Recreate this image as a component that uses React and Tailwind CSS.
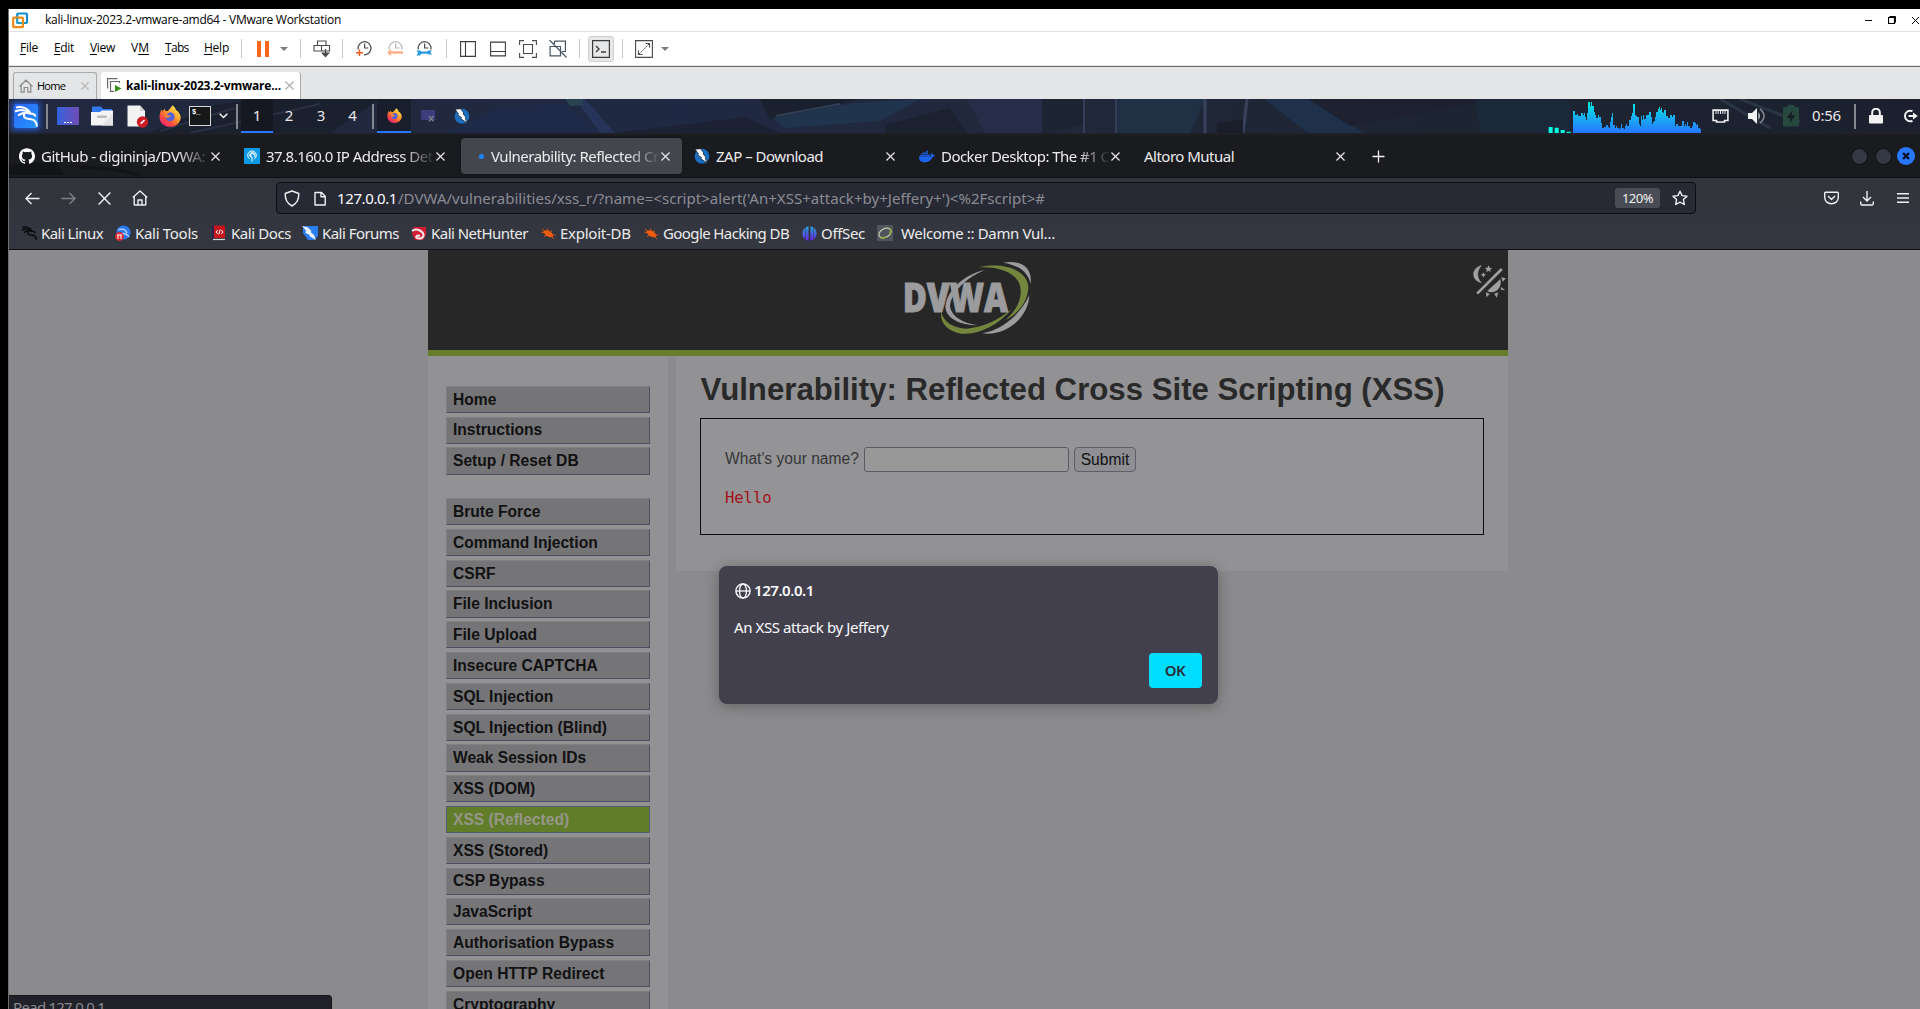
import React from "react";
import { SiGithub, SiDocker } from "react-icons/si";

const noto = "font-['Noto_Sans',sans-serif] text-[15px] whitespace-nowrap";
const ui = "font-['Open_Sans',sans-serif] text-[12px] whitespace-nowrap text-black";

function Svg({ w, h, vb, className = "", children }) {
  return (
    <svg className={`block shrink-0 ${className}`} width={w} height={h} viewBox={vb || `0 0 ${w} ${h}`} fill="none">
      {children}
    </svg>
  );
}

/* ---------- shared icons ---------- */

function Cross({ s = 8, className = "" }) {
  return (
    <Svg w={s} h={s} vb="0 0 8 8" className={className}>
      <path d="M0.4 0.4 7.6 7.6M7.6 0.4 0.4 7.6" stroke="currentColor" strokeWidth="1.1" />
    </Svg>
  );
}

function Dragon({ s, color, weight }) {
  return (
    <Svg w={s} h={s} vb="0 0 24 24">
      <path d="M2 3.500C8 2 14 4.500 16.500 9M1 7.500C6 5 12 6 16 9.500M4 11.500C8 8.500 13 8 17 10M10.500 9.500C8.500 14.500 13 15 17 15.200 20.500 15.500 22.500 18 23 22.500M17 9.500C19.500 9.500 21 11 21.500 12.500" stroke={color} strokeWidth={weight} />
    </Svg>
  );
}

function ZapIcon({ className = "" }) {
  return (
    <Svg w={16} h={16} className={className}>
      <circle cx="8" cy="8.2" r="7.4" fill="#1a6fc0" />
      <path d="M1 1.2 6.5.8 10 5.2 9 5.8 12 9.5 11.2 10 13.4 15 6.6 10.6 7.6 9.8 3.6 6.8 4.6 6Z" fill="#fff" stroke="#16181f" strokeWidth=".7" />
    </Svg>
  );
}

function FirefoxIcon({ s, className = "" }) {
  return (
    <Svg w={s} h={s} vb="0 0 24 24" className={className}>
      <defs>
        <linearGradient id="ffx" x1="19" y1="2" x2="4" y2="22" gradientUnits="userSpaceOnUse">
          <stop offset="0" stopColor="#ffe14d" />
          <stop offset=".4" stopColor="#ffa02c" />
          <stop offset=".72" stopColor="#ff4c3f" />
          <stop offset="1" stopColor="#f0257a" />
        </linearGradient>
      </defs>
      <path d="M14.6.4c2.6 1.600 3.600 3.600 4 5.400 1 .2 1.700.8 2 1.200 1.900 2.200 3 4.200 3 6.300C23.600 19.200 18.600 23.800 12.200 23.800 5.600 23.800.6 19.200.6 13c0-3.400 1-6.200 2.300-8.200L3.900 7.200 6.200 4l.8 2.600c1-.2 2-.1 2.800.3C10.600 4.400 13.400 3.600 14.600.4Z" fill="url(#ffx)" />
      <circle cx="12" cy="12.800" r="5" fill="#4f62dc" />
      <path d="M7 6.600c1.800-.6 3.800.4 4.300 1.900-1.400.2-1.500 1.500-2.900 1.900 1.200 1.600 3.400.7 4.600.9-1 3-4.600 3.300-6 1.600C6.200 11.500 6 8.700 7 6.600Z" fill="#ff8a2a" />
    </Svg>
  );
}

function SpiderIcon() {
  return (
    <Svg w={15} h={13}>
      <path d="M2.500 4C4 2.500 8 3 10.500 5.500 12.500 7.500 12.500 10 10.500 10.300 7 10.500 3 8 2.500 4Z" fill="#ee5a0e" />
      <path d="M1 1.800 4 4.500M.3 5 4 6M3 9.500 6 8M6.500 1.500 7 4M10.500 3.500 9.500 5.500M14.500 8 11 8M13 12 10.500 9.500" stroke="#ee5a0e" strokeWidth=".9" />
    </Svg>
  );
}

/* ---------- VMware chrome ---------- */

function TitleBar() {
  return (
    <div className="flex h-[23px] items-center border-b border-[#e0e0e0] bg-white pl-[3px]">
      <Svg w={17} h={17}>
        <rect x="5.200" y="1.500" width="9.800" height="9.500" rx="1" stroke="#0f8fcb" strokeWidth="2.200" />
        <rect x="1.200" y="5.700" width="9.800" height="9.500" rx="1" stroke="#ef8a14" strokeWidth="2.200" />
        <path d="M5.200 6v5h5" stroke="#2d9dc0" strokeWidth="1.600" />
      </Svg>
      <span className={`${ui} ml-4 tracking-[-0.262px]`}>kali-linux-2023.2-vmware-amd64 - VMware Workstation</span>
      <div className="ml-auto flex items-center text-black">
        <span className="h-px w-[7px] bg-black" />
        <Svg w={8} h={8} className="ml-4">
          <path d="M1.500 .5H7.500V6.500" stroke="#000" />
          <path d="M.5 1.500H6.500V7.500H.5Z" stroke="#000" strokeWidth="1.200" />
        </Svg>
        <Svg w={7} h={7} className="mr-px ml-4"><path d="M0 0 7 7M7 0 0 7" stroke="#000" /></Svg>
      </div>
    </div>
  );
}

function MenuWord({ a, mid, b, className }) {
  return (
    <span className={`${ui} -mt-px ${className}`}>
      {a}<u className="underline-offset-2">{mid}</u>{b}
    </span>
  );
}

const Sep = ({ className = "" }) => <span className={`h-[19px] w-px bg-[#c6c6c6] ${className}`} />;
const Caret = ({ className }) => (
  <Svg w={8} h={4} className={className}><path d="M0 0H8L4 4Z" fill="#7b7b7b" /></Svg>
);

function Clock({ dim, children, className }) {
  return (
    <Svg w={17} h={17} className={className}>
      <g opacity={dim ? 0.4 : 1}>
        <path d="M2.300 9.500A6.400 6.400 0 1 1 14.800 9.500M8.600 3.500V8H12.300" stroke="#4a4a4a" strokeWidth="1.200" />
      </g>
      {children}
    </Svg>
  );
}

function MenuBar() {
  return (
    <div className="flex h-[35px] items-start border-b border-[#6a6a6a] bg-white">
      <div className="flex h-[34px] w-full items-center border-b border-[#e6e6e6]">
        <MenuWord mid="F" b="ile" className="ml-[11px] w-[34px] tracking-[-0.25px]" />
        <MenuWord mid="E" b="dit" className="w-[36px] tracking-[-0.33px]" />
        <MenuWord mid="V" b="iew" className="w-[41px] tracking-[-0.3px]" />
        <MenuWord a="V" mid="M" className="w-[34px]" />
        <MenuWord mid="T" b="abs" className="w-[39px] tracking-[-0.7px]" />
        <MenuWord mid="H" b="elp" className="w-[37px] tracking-[-0.25px]" />
        <Sep />
        <div className="ml-[15px] flex gap-1">
          <span className="h-4 w-1 bg-[#f9671a]" />
          <span className="h-4 w-1 bg-[#f9671a]" />
        </div>
        <Caret className="ml-[11px]" />
        <Sep className="ml-[12px]" />
        <Svg w={18} h={18} className="ml-[12px]">
          <path d="M4.500 1H13V5.500H4.500ZM1 5.500H8.500V11H1ZM8.500 5.500H16.500V11H8.500Z" stroke="#4a4a4a" strokeWidth="1.100" />
          <path d="M12.500 9V16M9.500 13.200 12.500 16.500 15.500 13.200Z" stroke="#4a4a4a" strokeWidth="1.300" fill="#4a4a4a" />
        </Svg>
        <Sep className="ml-[11px]" />
        <Clock className="ml-[13px]">
          <path d="M14.800 9A6.400 6.400 0 0 1 8 14.800" stroke="#4a4a4a" strokeWidth="1.200" />
          <path d="M3.500 9.500V16M0 12.700H7" stroke="#f05a1a" strokeWidth="1.400" />
        </Clock>
        <Clock dim className="ml-[14px]"><path d="M0 12.500 4 9V11.200H16V13.800H4V16Z" fill="#ffb08c" /></Clock>
        <Clock className="ml-[12px]"><path d="M.5 10.500H4L5.500 11.500H11L12.500 10.500H16L14.500 12.500 16 14.500H12.500L11 13.700H5.500L4 15.500H.5L2 13Z" fill="#2c9ae0" /></Clock>
        <Sep className="ml-[13px]" />
        <Svg w={16} h={16} className="ml-[13px]"><path d="M.6.600H15.400V15.400H.6ZM5.500.5V15.500" stroke="#3c3c3c" strokeWidth="1.100" /></Svg>
        <Svg w={16} h={16} className="ml-[14px]"><path d="M.6 1.100H15.400V14.900H.6ZM.6 10.500H15.400" stroke="#3c3c3c" strokeWidth="1.100" /></Svg>
        <Svg w={18} h={18} className="ml-[13px]"><path d="M.6 5V.6H5M13 .6H17.400V5M17.400 13V17.400H13M5 17.400H.6V13M4.500 4.500H13.500V13.500H4.500Z" stroke="#4a4a4a" strokeWidth="1.100" /></Svg>
        <Svg w={18} h={18} className="ml-3"><path d="M5.500 1.100H16.400V11.500H13M5.500 1.100V4M1.100 6.500V15.900H11.500V6.500ZM.5 0 17.500 17.500" stroke="#485563" strokeWidth="1.200" /></Svg>
        <Sep className="ml-3" />
        <div className="ml-2 flex h-[26px] w-[26px] items-center justify-center rounded-[3px] border border-[#cfcfcf] bg-[#e6e7e8]">
          <Svg w={18} h={18}><path d="M.6.600H17.400V17.400H.6Z" stroke="#3c3c3c" strokeWidth="1.200" /><path d="M4 6 7 9 4 12M9 12H14" stroke="#3c3c3c" strokeWidth="1.400" /></Svg>
        </div>
        <Sep className="ml-2" />
        <Svg w={18} h={18} className="ml-3"><path d="M.6.600H17.400V17.400H.6ZM10.500 3.500H14.500V7.500M3.500 10.500V14.500H7.500" stroke="#4a4a4a" strokeWidth="1.100" /><path d="M14 4 4 14" stroke="#4a4a4a" strokeDasharray="2 1" /></Svg>
        <Caret className="ml-2" />
      </div>
    </div>
  );
}

function VmTabs() {
  return (
    <div className="flex h-[32px] items-end bg-[#e3e5e6] pl-1">
      <div className="flex h-[27px] w-[84px] items-center rounded-t-[3px] border border-b-0 border-[#a9a9a9] pl-[5px]">
        <Svg w={14} h={14}><path d="M.5 7.500 7 1.200 13.500 7.500M2.200 6V13.200H5.200V8.500H8.800V13.200H11.800V6" stroke="#8a8a8a" strokeWidth="1.200" /></Svg>
        <span className="ml-1 w-[44px] font-['Open_Sans',sans-serif] text-[11px] tracking-[-0.75px] text-black">Home</span>
        <Cross s={8} className="text-[#b0b0b0]" />
      </div>
      <div className="ml-1 flex h-[27px] w-[200px] items-center rounded-t-[3px] border-r border-[#a9a9a9] bg-white pl-[6px]">
        <Svg w={15} h={15}>
          <path d="M10.500.6H.6V10.500M12.500 5V3.500H3.500V13.400H7" stroke="#6a6a6a" strokeWidth="1.200" />
          <path d="M8 7 14.500 10.500 8 14Z" fill="#35931a" />
        </Svg>
        <span className={`${ui} ml-1 w-[159px] font-bold tracking-[-0.2px]`}>kali-linux-2023.2-vmware...</span>
        <Cross s={9} className="text-[#b0b0b0]" />
      </div>
    </div>
  );
}

/* ---------- Kali panel ---------- */

function PanelWallpaper() {
  return (
    <svg className="absolute inset-0 h-[34px] w-[1911px]" viewBox="9 99 1911 34" preserveAspectRatio="none">
      <defs>
        <linearGradient id="wp" x1="0" x2="1" y1="0" y2="0">
          <stop offset="0" stopColor="#222941" />
          <stop offset=".12" stopColor="#20283c" />
          <stop offset=".35" stopColor="#202943" />
          <stop offset=".55" stopColor="#20283a" />
          <stop offset=".75" stopColor="#1d2533" />
          <stop offset="1" stopColor="#1c202e" />
        </linearGradient>
      </defs>
      <rect x="9" y="99" width="1911" height="34" fill="url(#wp)" />
      <g opacity=".8">
        <path d="M150 133 215 105 265 99H380L330 133Z" fill="#1b1f2c" />
        <path d="M160 131 235 108M190 133 320 104" stroke="#2c3346" strokeWidth="2" />
        <path d="M445 133 500 106 565 104 600 133Z" fill="#1f2b4b" />
        <path d="M575 99H585L615 133H600Z" fill="#27375e" />
        <path d="M565 99H583V105L570 106Z" fill="#2c4a55" />
        <path d="M615 133 745 117 780 133Z" fill="#1c2030" />
        <path d="M760 99H860L770 120Z" fill="#1b1f2b" />
        <path d="M772 118 855 103 920 99 880 121 785 128Z" fill="#213752" />
        <path d="M776 116 840 104" stroke="#34465c" strokeWidth="2" />
        <path d="M885 125 949 108 967 133H885Z" fill="#1c202d" />
        <path d="M967 99H1042V133H985Z" fill="#272f4c" />
        <path d="M1042 99H1085V125L1042 133Z" fill="#1d2430" />
        <path d="M1084 99V133M1116 99V133" stroke="#3a4460" strokeWidth="2" />
        <path d="M1118 99H1205L1190 133H1118Z" fill="#1f3448" />
        <path d="M1205 99V133M1247 99 1243 133" stroke="#414866" strokeWidth="3" />
        <path d="M1217 124 1243 119V133H1217Z" fill="#191c28" />
        <path d="M1264 99H1308L1364 133H1308Z" fill="#1f3350" />
        <path d="M1308 99H1500L1350 126Z" fill="#1d2030" />
        <path d="M1475 99H1570V133H1480Z" fill="#1b2a3b" />
        <path d="M1720 99 1770 128M1740 99 1800 122" stroke="#2d3a48" strokeWidth="3" />
      </g>
    </svg>
  );
}

function CpuGraph() {
  return (
    <Svg w={154} h={32} vb="448 303 462 96">
      <defs>
        <linearGradient id="cpu" x1="0" y1="306" x2="0" y2="398" gradientUnits="userSpaceOnUse">
          <stop offset="0" stopColor="#00f0e0" />
          <stop offset=".5" stopColor="#16b0f2" />
          <stop offset="1" stopColor="#2777ff" />
        </linearGradient>
      </defs>
      <path d="M450 381h12v18h-12ZM468 383h12v16h-12ZM486 390h12v9h-12ZM504 395h12v4h-12Z" fill="#00ffe0" />
      <path
        shapeRendering="crispEdges"
        fill="url(#cpu)"
        d="M522 399V333H528V345H534V341H537V348H546V340H552V345H555V339H558V350H561V360H564V340H567V306H573V318H576V307H579V318H585V335H588V345H591V354H597V345H600V352H606V370H609V384H615V381H621V374H627V381H630V384H633V366H636V352H639V339H642V375H648V384H651V378H654V384H660V387H663V384H666V372H669V384H675V387H678V378H681V372H684V378H690V360H696V348H699V340H702V312H708V345H711V349H714V351H720V372H723V377H726V348H730V360H733V345H736V357H742V345H752V336H756V351H759V372H762V366H766V363H769V350H773V335H778V328H781V321H784V329H787V325H790V335H793V340H796V331H802V348H808V354H813V345H819V350H822V345H828V378H833V372H838V377H849V363H855V378H858V372H861V378H864V366H867V377H873V384H879V378H882V366H888V369H893V375H896V371H899V384H903V387H906V399Z"
      />
    </Svg>
  );
}

const PSep = ({ className = "" }) => <span className={`h-[25px] w-[2px] bg-[#85878f] ${className}`} />;

function KaliPanel() {
  const num = `${noto} flex h-[33px] items-center justify-center text-[#e8e8ea]`;
  return (
    <div className="relative h-[36px] border-b-2 border-[#1f2025] bg-[#20273a]">
      <PanelWallpaper />
      <div className="relative flex h-[34px] items-center">
        <div className="ml-[5px] flex h-6 w-6 items-center justify-center overflow-hidden rounded-[2px] bg-gradient-to-br from-[#2e63f5] to-[#2596ff] shadow-[0_0_5px_2px_#2458c8]">
          <Dragon s={24} color="#fff" weight={2} />
        </div>
        <PSep className="ml-2" />
        <div className="ml-[9px] flex h-[18px] w-[22px] items-end justify-center gap-px bg-gradient-to-r from-[#2a63dd] to-[#6d4bb5] pb-0.5">
          <span className="h-px w-0.5 bg-white" /><span className="h-px w-0.5 bg-white" /><span className="h-px w-0.5 bg-white" />
        </div>
        <Svg w={22} h={20} className="ml-3">
          <path d="M1 8V1.500Q1 .5 2 .5H10L12 3H20Q21 3 21 4V8Z" fill="#2f78ee" />
          <path d="M0 6H9L11 4.500H22V19.500H0Z" fill="#f4f4f4" />
          <path d="M22 7V19.500H11Z" fill="#e3e3e3" />
          <rect x="6" y="9.500" width="10" height="2.500" rx="1" fill="#bdbdbd" />
        </Svg>
        <Svg w={22} h={23} className="ml-[14px]">
          <path d="M.5.500H13L18 6V21.500H.5Z" fill="#f3f3f3" />
          <path d="M13 .5V6H18Z" fill="#cfcfcf" />
          <circle cx="15.500" cy="17" r="5.700" fill="#cc1d24" />
          <path d="M13.200 19.300 14 17.300 17 14.500 18 15.500 15.200 18.500Z" fill="#fff" />
        </Svg>
        <FirefoxIcon s={22} className="ml-2.5" />
        <div className="ml-2 h-5 w-[22px] border border-[#d6d6d6] bg-[#151718]">
          <div className="h-2 pl-0.5 font-['Liberation_Mono',monospace] text-[7px] leading-[10px] font-bold text-white">$_</div>
        </div>
        <Svg w={9} h={6} className="ml-2"><path d="M.7.800 4.500 4.500 8.300.8" stroke="#f0f0f0" strokeWidth="1.600" /></Svg>
        <PSep className="ml-2" />
        <div className="ml-[3px] h-[34px] w-8 border-b-2 border-[#2777ff] bg-[#151821]"><div className={num}>1</div></div>
        <div className={`${num} -mt-px w-8`}>2</div>
        <div className={`${num} -mt-px w-8`}>3</div>
        <div className={`${num} -mt-px w-[31px]`}>4</div>
        <PSep className="ml-1" />
        <div className="ml-[3px] flex h-[34px] w-[34px] items-center justify-center border-b-2 border-[#2777ff] bg-[#191e2d]"><FirefoxIcon s={15} /></div>
        <Svg w={16} h={14} className="ml-[9px]">
          <path d="M1 1H15V11H1Z" fill="#3d3c7c" />
          <path d="M9 7 13.500 12.500M13.500 7 9 12.500" stroke="#7a7f8c" strokeWidth="1.300" />
        </Svg>
        <ZapIcon className="ml-[18px]" />
        <div className="mr-[10px] ml-auto flex h-[34px] items-end"><CpuGraph /></div>
        <Svg w={17} h={14}>
          <path d="M1.100 1.100H15.900V11.500H12.500V13H4.500V11.500H1.100Z" stroke="#f0f0f0" strokeWidth="1.600" />
          <path d="M4 2V5M6.200 2V5M8.500 2V5M10.800 2V5M13 2V5" stroke="#f0f0f0" strokeWidth="1" />
        </Svg>
        <Svg w={18} h={16} className="ml-[19px]">
          <path d="M0 5H4L9 0V16L4 11H0Z" fill="#f2f2f2" />
          <path d="M10.500 4Q13 8 10.500 12Z" fill="#f2f2f2" />
          <path d="M12 .8Q20 8 12 15.200" stroke="#83868e" strokeWidth="1.600" />
        </Svg>
        <Svg w={16} h={22} className="ml-[17px]">
          <path d="M0 2H4.500V0H11.500V2H16V21.500H0Z" fill="#27483f" />
          <path d="M9.500 5.500 3.500 13H7.500L6.500 18 12.500 10.500H8.500Z" fill="#151c22" />
        </Svg>
        <span className={`${noto} -mt-0.5 ml-[13px] w-[29px] tracking-[-0.2px] text-[#e8e8ea]`}>0:56</span>
        <PSep className="ml-[13px]" />
        <Svg w={14} h={16} className="ml-[13px]">
          <rect y="7" width="14" height="8.500" rx="1" fill="#f2f2f2" />
          <path d="M3.200 7.500V4.500A3.800 3.800 0 0 1 10.800 4.500V7.500" stroke="#f2f2f2" strokeWidth="2" />
        </Svg>
        <Svg w={15} h={14} className="mr-[2px] ml-[20px]">
          <path d="M9.500 2.200A5.300 5.300 0 1 0 9.500 11.800" stroke="#f2f2f2" strokeWidth="2" />
          <path d="M5.500 7H11" stroke="#f2f2f2" strokeWidth="2" /><path d="M10 3.500 14.800 7 10 10.500Z" fill="#f2f2f2" />
        </Svg>
      </div>
    </div>
  );
}

/* ---------- Firefox ---------- */

function Tab({ icon, title, track, fade, active, plain, last }) {
  return (
    <div className={`flex h-9 items-center rounded-[4px] ${last ? "w-[217px]" : "mr-1 w-[221px]"} ${active ? "bg-[#44464d] shadow-[0_0_3px_#0006]" : ""}`}>
      <div className={`flex items-center justify-center ${plain ? "w-2" : "ml-2 w-[22px] pr-1.5"}`}>{icon}</div>
      <div className={`overflow-hidden ${plain ? "w-[192px]" : "w-[170px]"} ${fade ? "[mask-image:linear-gradient(to_right,black_80%,transparent_100%)]" : ""}`}>
        <span className={`${noto} ${track} text-[#ececec]`}>{title}</span>
      </div>
      <Cross s={9} className="text-[#e4e4e4]" />
    </div>
  );
}

function TabBar() {
  return (
    <div className="relative flex h-[43px] items-center border-b border-[#0e0f13] bg-[#1a1b1f]">
      <svg className="absolute bottom-0 left-0" width="260" height="16" fill="none">
        <path d="M0 4 48 0 55 14H0Z" fill="#131417" /><path d="M70 6Q110 8 130 14" stroke="#131417" strokeWidth="3" />
      </svg>
      <div className="relative flex w-full items-center pl-[2px]">
        <Tab fade track="tracking-[-0.49px]" icon={<SiGithub size={16} color="#fff" />} title="GitHub - digininja/DVWA:" />
        <Tab fade track="tracking-[-0.52px]" title="37.8.160.0 IP Address Det"
          icon={<Svg w={16} h={16}><rect width="16" height="16" rx="1" fill="#0d9be6" /><path d="M8 13.500V9M8 8.500A1.500 1.500 0 1 1 9.500 7M5.800 11A4.300 4.300 0 1 1 10.200 11M7 9.200A2.600 2.600 0 1 1 10 9" stroke="#fff" strokeWidth="1" /></Svg>} />
        <Tab active fade track="tracking-[-0.49px]" icon={<span className="ml-2 h-[5px] w-[5px] rounded-full bg-[#1d86ff]" />} title="Vulnerability: Reflected Cr" />
        <Tab track="tracking-[-0.49px]" icon={<ZapIcon />} title="ZAP – Download" />
        <Tab fade track="tracking-[-0.55px]" icon={<SiDocker size={17} color="#1d63ed" />} title="Docker Desktop: The #1 C" />
        <Tab plain last track="tracking-[-0.51px]" title="Altoro Mutual" />
        <Svg w={13} h={13} className="ml-[19px]"><path d="M6.500.5V12.500M.5 6.500H12.500" stroke="#f2f2f2" strokeWidth="1.300" /></Svg>
        <div className="mr-[5px] ml-auto flex items-center gap-[7px]">
          <span className="h-[17px] w-[17px] rounded-full border border-[#0c0d10] bg-[#343844]" />
          <span className="h-[17px] w-[17px] rounded-full border border-[#0c0d10] bg-[#343844]" />
          <span className="-ml-0.5 flex h-[18px] w-[18px] items-center justify-center rounded-full bg-[#2777ff]">
            <Svg w={8} h={8}><path d="M1 1 7 7M7 1 1 7" stroke="#0b1020" strokeWidth="2.300" /></Svg>
          </span>
        </div>
      </div>
    </div>
  );
}

function NavBar() {
  const ic = { stroke: "#f0f0f2", strokeWidth: 1.4 };
  return (
    <div className="flex h-10 items-center">
      <Svg w={15} h={13} className="ml-[16px]"><path d="M14.500 6.500H1.200M6.500 1 1 6.500 6.500 12" {...ic} /></Svg>
      <Svg w={15} h={13} className="ml-[21px] opacity-40"><path d="M.5 6.500H13.800M8.500 1 14 6.500 8.500 12" {...ic} /></Svg>
      <Svg w={13} h={13} className="ml-[22px]"><path d="M.6.600 12.400 12.400M12.400.6.600 12.400" {...ic} /></Svg>
      <Svg w={16} h={16} className="ml-[21px]"><path d="M.8 7.500 8 1 15.200 7.500M2.200 6.500V14.200Q2.200 15 3 15H13Q13.800 15 13.800 14.200V6.500M6 15V10H10V15" {...ic} strokeLinejoin="round" /></Svg>
      <div className="ml-[128px] flex h-[32px] w-[1420px] items-center rounded-[4px] border border-[#0c0d12] bg-[#272935]">
        <Svg w={16} h={17} className="ml-[7px]"><path d="M8 1 14.800 3.500C15 9 13 13.500 8 16 3 13.500 1 9 1.200 3.500Z" {...ic} strokeLinejoin="round" /></Svg>
        <Svg w={12} h={15} className="ml-[14px]"><path d="M1 1.500H7.500L11.200 5.200V14H1ZM7 1.500V5.700H11.200" {...ic} strokeLinejoin="round" /></Svg>
        <span className={`${noto} ml-[11px] w-[60px] tracking-[-0.39px] text-[#fbfbfe]`}>127.0.0.1</span>
        <span className={`${noto} ml-px tracking-[0.037px] text-[#8b8c93]`}>/DVWA/vulnerabilities/xss_r/?name=&lt;script&gt;alert('An+XSS+attack+by+Jeffery+')&lt;%2Fscript&gt;#</span>
        <span className="ml-auto flex h-5 w-[45px] items-center justify-center rounded-[3px] bg-[#494b55] pt-px font-['Noto_Sans',sans-serif] text-[13px] tracking-[-0.5px] text-[#f0f0f2]">120%</span>
        <Svg w={16} h={16} className="mr-[7px] ml-3"><path d="M8 1.200 10.100 5.600 15 6.200 11.400 9.500 12.300 14.500 8 12.100 3.700 14.500 4.600 9.500 1 6.200 5.900 5.600Z" {...ic} strokeLinejoin="round" /></Svg>
      </div>
      <Svg w={15} h={14} className="ml-auto"><path d="M1.700 1.200H13.300Q14.300 1.200 14.300 2.200V6.500C14.300 10.500 11 12.800 7.500 12.800 4 12.800.7 10.500.7 6.500V2.200Q.7 1.200 1.700 1.200ZM4 5 7.500 8.500 11 5" {...ic} strokeLinejoin="round" /></Svg>
      <Svg w={14} h={15} className="ml-[21px]"><path d="M7 0V9.500M3 6 7 10 11 6M.7 10.500V12.500Q.7 14 2.200 14H11.800Q13.300 14 13.300 12.500V10.500" {...ic} /></Svg>
      <Svg w={12} h={10} className="mr-[11px] ml-[23px]"><path d="M0 .7H12M0 5H12M0 9.300H12" {...ic} /></Svg>
    </div>
  );
}

const bookmarks = [
  { t: "Kali Linux", w: "w-[74px] tracking-[-0.55px]", i: <Dragon s={16} color="#0a0b0d" weight={2.3} /> },
  { t: "Kali Tools", w: "w-[76px] tracking-[-0.3px]", i: <Svg w={16} h={16}><circle cx="8.500" cy="7.500" r="7" fill="#2a78f0" /><path d="M3 5C7 3 11 4.500 12 8M7 9C9 7.500 13 10 14 12" stroke="#bcd8ff" strokeWidth="1.300" /><circle cx="4.500" cy="11.500" r="4.400" fill="#e0292f" /><path d="M3 10V14M6 10V14M2 10H7" stroke="#fff" /></Svg> },
  { t: "Kali Docs", w: "w-[71px] tracking-[-0.42px]", i: <Svg w={14} h={16}><path d="M0 .5H13V13H0Z" fill="#c9141c" /><path d="M0 .5H2V14H0Z" fill="#2f2350" /><path d="M1 14.500H13" stroke="#d8d8d8" strokeWidth="1.200" /><path d="M5.700 5 4 7 5.700 9M9.300 5 11 7 9.300 9M8.200 4.500 6.800 9.500" stroke="#fff" /></Svg> },
  { t: "Kali Forums", w: "w-[89px] tracking-[-0.54px]", i: <Svg w={17} h={16}><path d="M1 1H16V11L12 15H6L1 8Z" fill="#2b7df2" /><path d="M0 1 6 2.500 9.500 6 8.500 7 12 10 14 15 8 11.500 7 9.500 3.500 8 4 5.500Z" fill="#eef4fa" /></Svg> },
  { t: "Kali NetHunter", w: "w-[109px] tracking-[-0.53px]", i: <Svg w={16} h={15}><path d="M3 1H15V9L12 14H4L1 8Z" fill="#d21d30" /><path d="M1 5C6 1 13 6 12.500 10 11 13.500 6 13 5 11 6 8.500 8 9.500 9 10" stroke="#f2e6ea" strokeWidth="2" /></Svg> },
  { t: "Exploit-DB", w: "w-[83px] tracking-[-0.25px]", i: <SpiderIcon /> },
  { t: "Google Hacking DB", w: "w-[138px] tracking-[-0.6px]", i: <SpiderIcon /> },
  { t: "OffSec", w: "w-[56px] tracking-[-0.33px]", i: <Svg w={15} h={15}><defs><linearGradient id="os" x1="0" y1="0" x2="0" y2="15" gradientUnits="userSpaceOnUse"><stop offset="0" stopColor="#22a7d8" /><stop offset="1" stopColor="#6a20e8" /></linearGradient></defs><path d="M6.500.2V14.800A7.400 7.400 0 0 1 6.500.2ZM8.500.2A7.400 7.400 0 0 1 8.500 14.800Z" fill="url(#os)" /><path d="M3.500 1V14M11.500 1V14" stroke="#343740" strokeWidth=".5" /></Svg> },
  { t: "Welcome :: Damn Vul…", w: "ml-2 w-[154px] tracking-[-0.35px]", i: <Svg w={16} h={16}><rect width="16" height="16" fill="#51555c" /><ellipse cx="8" cy="8" rx="6.500" ry="4.300" transform="rotate(-28 8 8)" stroke="#c3cfb4" strokeWidth="1.300" /><path d="M12.500 3.500Q15 6 12.500 9.500M3.500 12.500Q6 13.500 9 12" stroke="#8fb030" strokeWidth="1.500" /></Svg> },
];

function Bookmarks() {
  return (
    <div className="flex h-[30px] items-center pl-[12px]">
      {bookmarks.map((b) => (
        <div key={b.t} className="flex items-center">
          <div className="flex w-[16px] justify-center">{b.i}</div>
          <span className={`${noto} ${b.w} ml-1 text-[#ececec]`}>{b.t}</span>
        </div>
      ))}
    </div>
  );
}

/* ---------- DVWA page ---------- */

const groups = [
  ["Home", "Instructions", "Setup / Reset DB"],
  ["Brute Force", "Command Injection", "CSRF", "File Inclusion", "File Upload", "Insecure CAPTCHA", "SQL Injection", "SQL Injection (Blind)", "Weak Session IDs", "XSS (DOM)", "XSS (Reflected)", "XSS (Stored)", "CSP Bypass", "JavaScript", "Authorisation Bypass", "Open HTTP Redirect", "Cryptography"],
];

function DvwaHeader() {
  return (
    <div className="relative h-[106px] border-b-[6px] border-[#667d2b] bg-[#272728]">
      <svg className="absolute top-[11px] left-[476px]" width="128" height="74" viewBox="132 63 384 222" fill="none">
        <path d="M374 90C310 105 262 150 256 200C258 235 300 255 352 256C310 248 276 232 270 200C272 160 315 115 374 90Z" fill="#9c9c9e" />
        <path d="M430 68C480 60 518 78 512 132C505 100 480 76 430 68Z" fill="#9c9c9e" />
        <path d="M508 166C505 235 435 290 366 280C425 270 480 225 508 166Z" fill="#9c9c9e" />
        <path d="M356 82C420 66 500 85 505 140C505 185 470 225 436 240C465 215 484 185 482 150C480 100 420 78 356 82Z" fill="#74863d" />
        <path d="M243 215C250 245 280 265 320 266C370 262 415 240 455 208C415 255 356 286 305 281C262 274 240 250 243 215Z" fill="#74863d" />
        <text x="128" y="216" textLength="316" lengthAdjust="spacingAndGlyphs" fontFamily="Open Sans, sans-serif" fontWeight="800" fontSize="122" fill="#9c9c9e" stroke="#9c9c9e" strokeWidth="3">DVWA</text>
      </svg>
      <svg className="absolute top-[15px] right-[2px]" width="33" height="33" viewBox="218 74 98 99" fill="none">
        <path d="M242 76C212 84 212 120 242 127C228 112 228 92 242 76Z" fill="#a0a0a2" stroke="#a0a0a2" strokeWidth="2" />
        <path d="M264 74 267 82 275 83 269 88 271 95 264 91 257 95 259 88 253 83 261 82ZM249 96 251 101 257 103 251 106 249 112 246 106 241 103 246 101Z" fill="#a0a0a2" />
        <path d="M304 86 230 160" stroke="#a0a0a2" strokeWidth="8" />
        <path d="M300 116C306 146 280 164 260 152Z" fill="#a0a0a2" />
        <path d="M302 111 316 114 307 124ZM302 140 314 150 301 148ZM281 160 293 156 289 172ZM256 156 268 161 258 171Z" fill="#a0a0a2" />
      </svg>
    </div>
  );
}

function Sidebar() {
  return (
    <div className="h-full w-60 overflow-hidden bg-[#929294] px-[18px] pt-[29.8px]">
      {groups.map((g, i) => (
        <div key={i} className="mb-[20px] flex flex-col">
          {g.map((t) => (
            <div
              key={t}
              className={`mb-[3.600px] flex h-[27.200px] items-center border pl-[6px] font-['Liberation_Sans',Arial,sans-serif] text-[15.6px] font-bold whitespace-nowrap ${
                t === "XSS (Reflected)"
                  ? "border-[#4f5f6c] bg-[#627d2a] text-[#959688]"
                  : "border-t-[#808082] border-r-[#4c4f61] border-b-[#4c4f61] border-l-[#808082] bg-[#757577] text-[#111112]"
              }`}
            >
              {t}
            </div>
          ))}
        </div>
      ))}
    </div>
  );
}

function Main() {
  const f = "font-['Liberation_Sans',Arial,sans-serif]";
  return (
    <div className="ml-2 h-[215px] w-[832px] bg-[#929294] px-6 pt-4">
      <h1 className={`${f} pl-[0.5px] text-[31.2px] leading-[36px] font-bold whitespace-nowrap text-[#29292a]`}>Vulnerability: Reflected Cross Site Scripting (XSS)</h1>
      <div className="mt-[10px] h-[117px] border border-[#0c0c0e] bg-[#949496] pt-[28px] pl-[24px]">
        <div className={`${f} flex h-[25px] items-center text-[15.6px] whitespace-nowrap text-[#363637]`}>
          <span className="-mt-0.5 w-[139px]">What's your name?</span>
          <span className="h-[25px] w-[205px] rounded-[3px] border border-[#5a5a66] bg-[#989899]" />
          <span className="ml-[5px] flex h-[25px] w-[62px] items-center justify-center rounded-[4px] border border-[#5f5f6c] bg-[#8e8e93] text-[#111112]">Submit</span>
        </div>
        <div className="mt-[17px] font-['DejaVu_Sans_Mono',monospace] text-[15.6px] leading-[18px] tracking-[-0.09px] text-[#a5101a]">Hello</div>
      </div>
    </div>
  );
}

function AlertDialog() {
  return (
    <div className="absolute top-[316px] left-[710px] h-[138px] w-[499px] rounded-[8px] bg-[#42404d] px-4 pt-[14px] shadow-[0_2px_14px_rgba(0,0,0,0.3)]">
      <div className="flex h-5 items-center">
        <Svg w={16} h={16} className="mt-0.5">
          <circle cx="8" cy="8" r="7.100" stroke="#fbfbfe" strokeWidth="1.400" />
          <ellipse cx="8" cy="8" rx="3.500" ry="7" stroke="#fbfbfe" strokeWidth="1.300" />
          <path d="M1 8H15" stroke="#fbfbfe" strokeWidth="1.300" />
        </Svg>
        <span className={`${noto} ml-[3px] font-semibold tracking-[-0.45px] text-[#fbfbfe]`}>127.0.0.1</span>
      </div>
      <div className={`${noto} mt-[16px] -ml-px leading-[22px] tracking-[-0.41px] text-[#fbfbfe]`}>An XSS attack by Jeffery</div>
      <div className="mt-[15px] ml-auto flex h-[35px] w-[53px] items-center justify-center rounded-[4px] bg-[#00ddff]">
        <span className={`${noto} -ml-px font-semibold tracking-[-0.4px] text-[#2b2a33]`}>OK</span>
      </div>
    </div>
  );
}

export default function App() {
  return (
    <div className="h-[1009px] w-[1920px] overflow-hidden bg-black pt-[9px] pl-2">
      <div className="flex h-[1000px] flex-col border-l border-[#6f6f70]">
        <TitleBar />
        <MenuBar />
        <VmTabs />
        <KaliPanel />
        <TabBar />
        <div className="h-[72px] border-b border-[#0e0f13] bg-gradient-to-b from-[#32343b] to-[#343740]">
          <NavBar />
          <Bookmarks />
        </div>
        <div className="relative flex-1 overflow-hidden bg-[#8b8b8d]">
          <div className="ml-[419px] h-full w-[1080px]">
            <DvwaHeader />
            <div className="flex h-[653px]">
              <Sidebar />
              <Main />
            </div>
          </div>
          <AlertDialog />
          <div className={`${noto} absolute bottom-0 left-0 h-[14px] w-[323px] overflow-hidden rounded-tr-[4px] border-t border-r border-[#14141a] bg-[#21212a] pl-1 leading-[22px] tracking-[-0.77px] text-[#8a8a90]`}>
            Read 127.0.0.1
          </div>
        </div>
      </div>
    </div>
  );
}
